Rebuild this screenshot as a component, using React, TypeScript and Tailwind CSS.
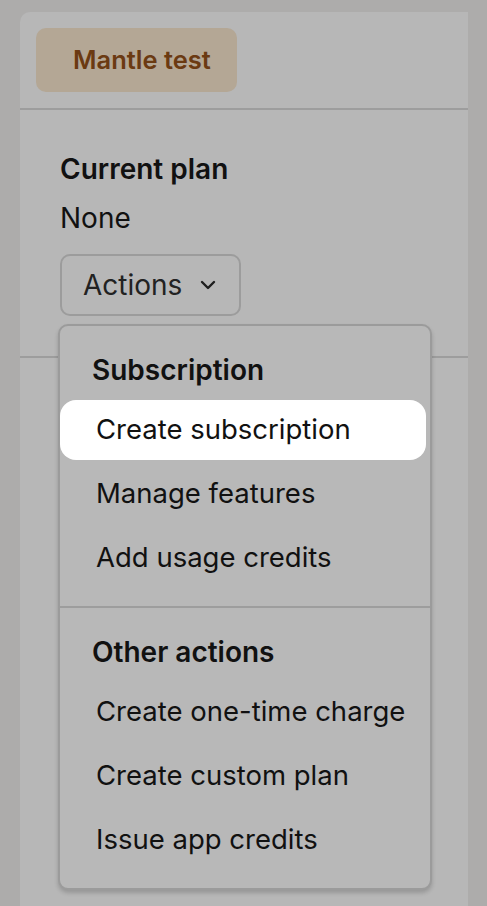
import React from 'react';

const sections = [
  {
    title: 'Subscription',
    items: ['Create subscription', 'Manage features', 'Add usage credits'],
  },
  {
    title: 'Other actions',
    items: ['Create one-time charge', 'Create custom plan', 'Issue app credits'],
  },
];

const Chevron = () => (
  <svg width="16" height="10" viewBox="0 0 16 10" fill="none" className="ml-[18px]">
    <path d="M2 2l6 6 6-6" stroke="#1f1f1f" strokeWidth="2.4" strokeLinecap="round" strokeLinejoin="round" />
  </svg>
);

const ActionsMenu = () => (
  <div className="absolute left-[-2px] top-[70px] w-[374px] rounded-[10px] border-2 border-[#9b9b9b] bg-[#b8b8b8] shadow-[0_3px_4px_rgba(0,0,0,0.18)]">
    {sections.map((section, i) => (
      <div
        key={section.title}
        className={`pt-4 pb-4 ${i > 0 ? 'border-t-2 border-[#9d9d9d]' : ''}`}
      >
        <div className="flex h-14 items-center pl-[32px] text-[28px] font-semibold text-[#111]">
          {section.title}
        </div>
        {section.items.map((item) => (
          <div key={item} className="py-0.5 pr-1">
            <div
              className={`flex h-[60px] items-center rounded-[16px] pl-[36px] text-[27.5px] text-[#111] ${
                item === 'Create subscription' ? 'bg-white' : ''
              }`}
            >
              {item}
            </div>
          </div>
        ))}
      </div>
    ))}
  </div>
);

export default function App() {
  return (
    <div
      className="min-h-[906px] w-full bg-[#adacab] pl-5 pt-3"
      style={{ fontFamily: 'Inter, "Noto Sans", sans-serif' }}
    >
      <div className="min-h-[894px] w-[448px] rounded-tl-[10px] bg-[#b7b7b7]">
        <div className="border-b-2 border-[#9d9d9d] p-4">
          <div className="flex h-16 w-[201px] items-center rounded-[10px] bg-[#b4a795] pl-[37px] text-[25.5px] font-semibold text-[#6b3a12]">
            Mantle test
          </div>
        </div>
        <div className="border-b-2 border-[#9d9d9d] pb-10 pl-10 pt-[42px]">
          <div className="text-[28px] font-semibold leading-[34px] text-[#111]">Current plan</div>
          <div className="mt-4 text-[28px] leading-8 text-[#111]">None</div>
          <div className="relative mt-5 w-[181px]">
            <button className="flex h-[62px] w-[181px] items-center rounded-[10px] border-2 border-[#9c9c9c] pl-[21px] text-[28px] text-[#222]">
              Actions
              <Chevron />
            </button>
            <ActionsMenu />
          </div>
        </div>
      </div>
    </div>
  );
}
